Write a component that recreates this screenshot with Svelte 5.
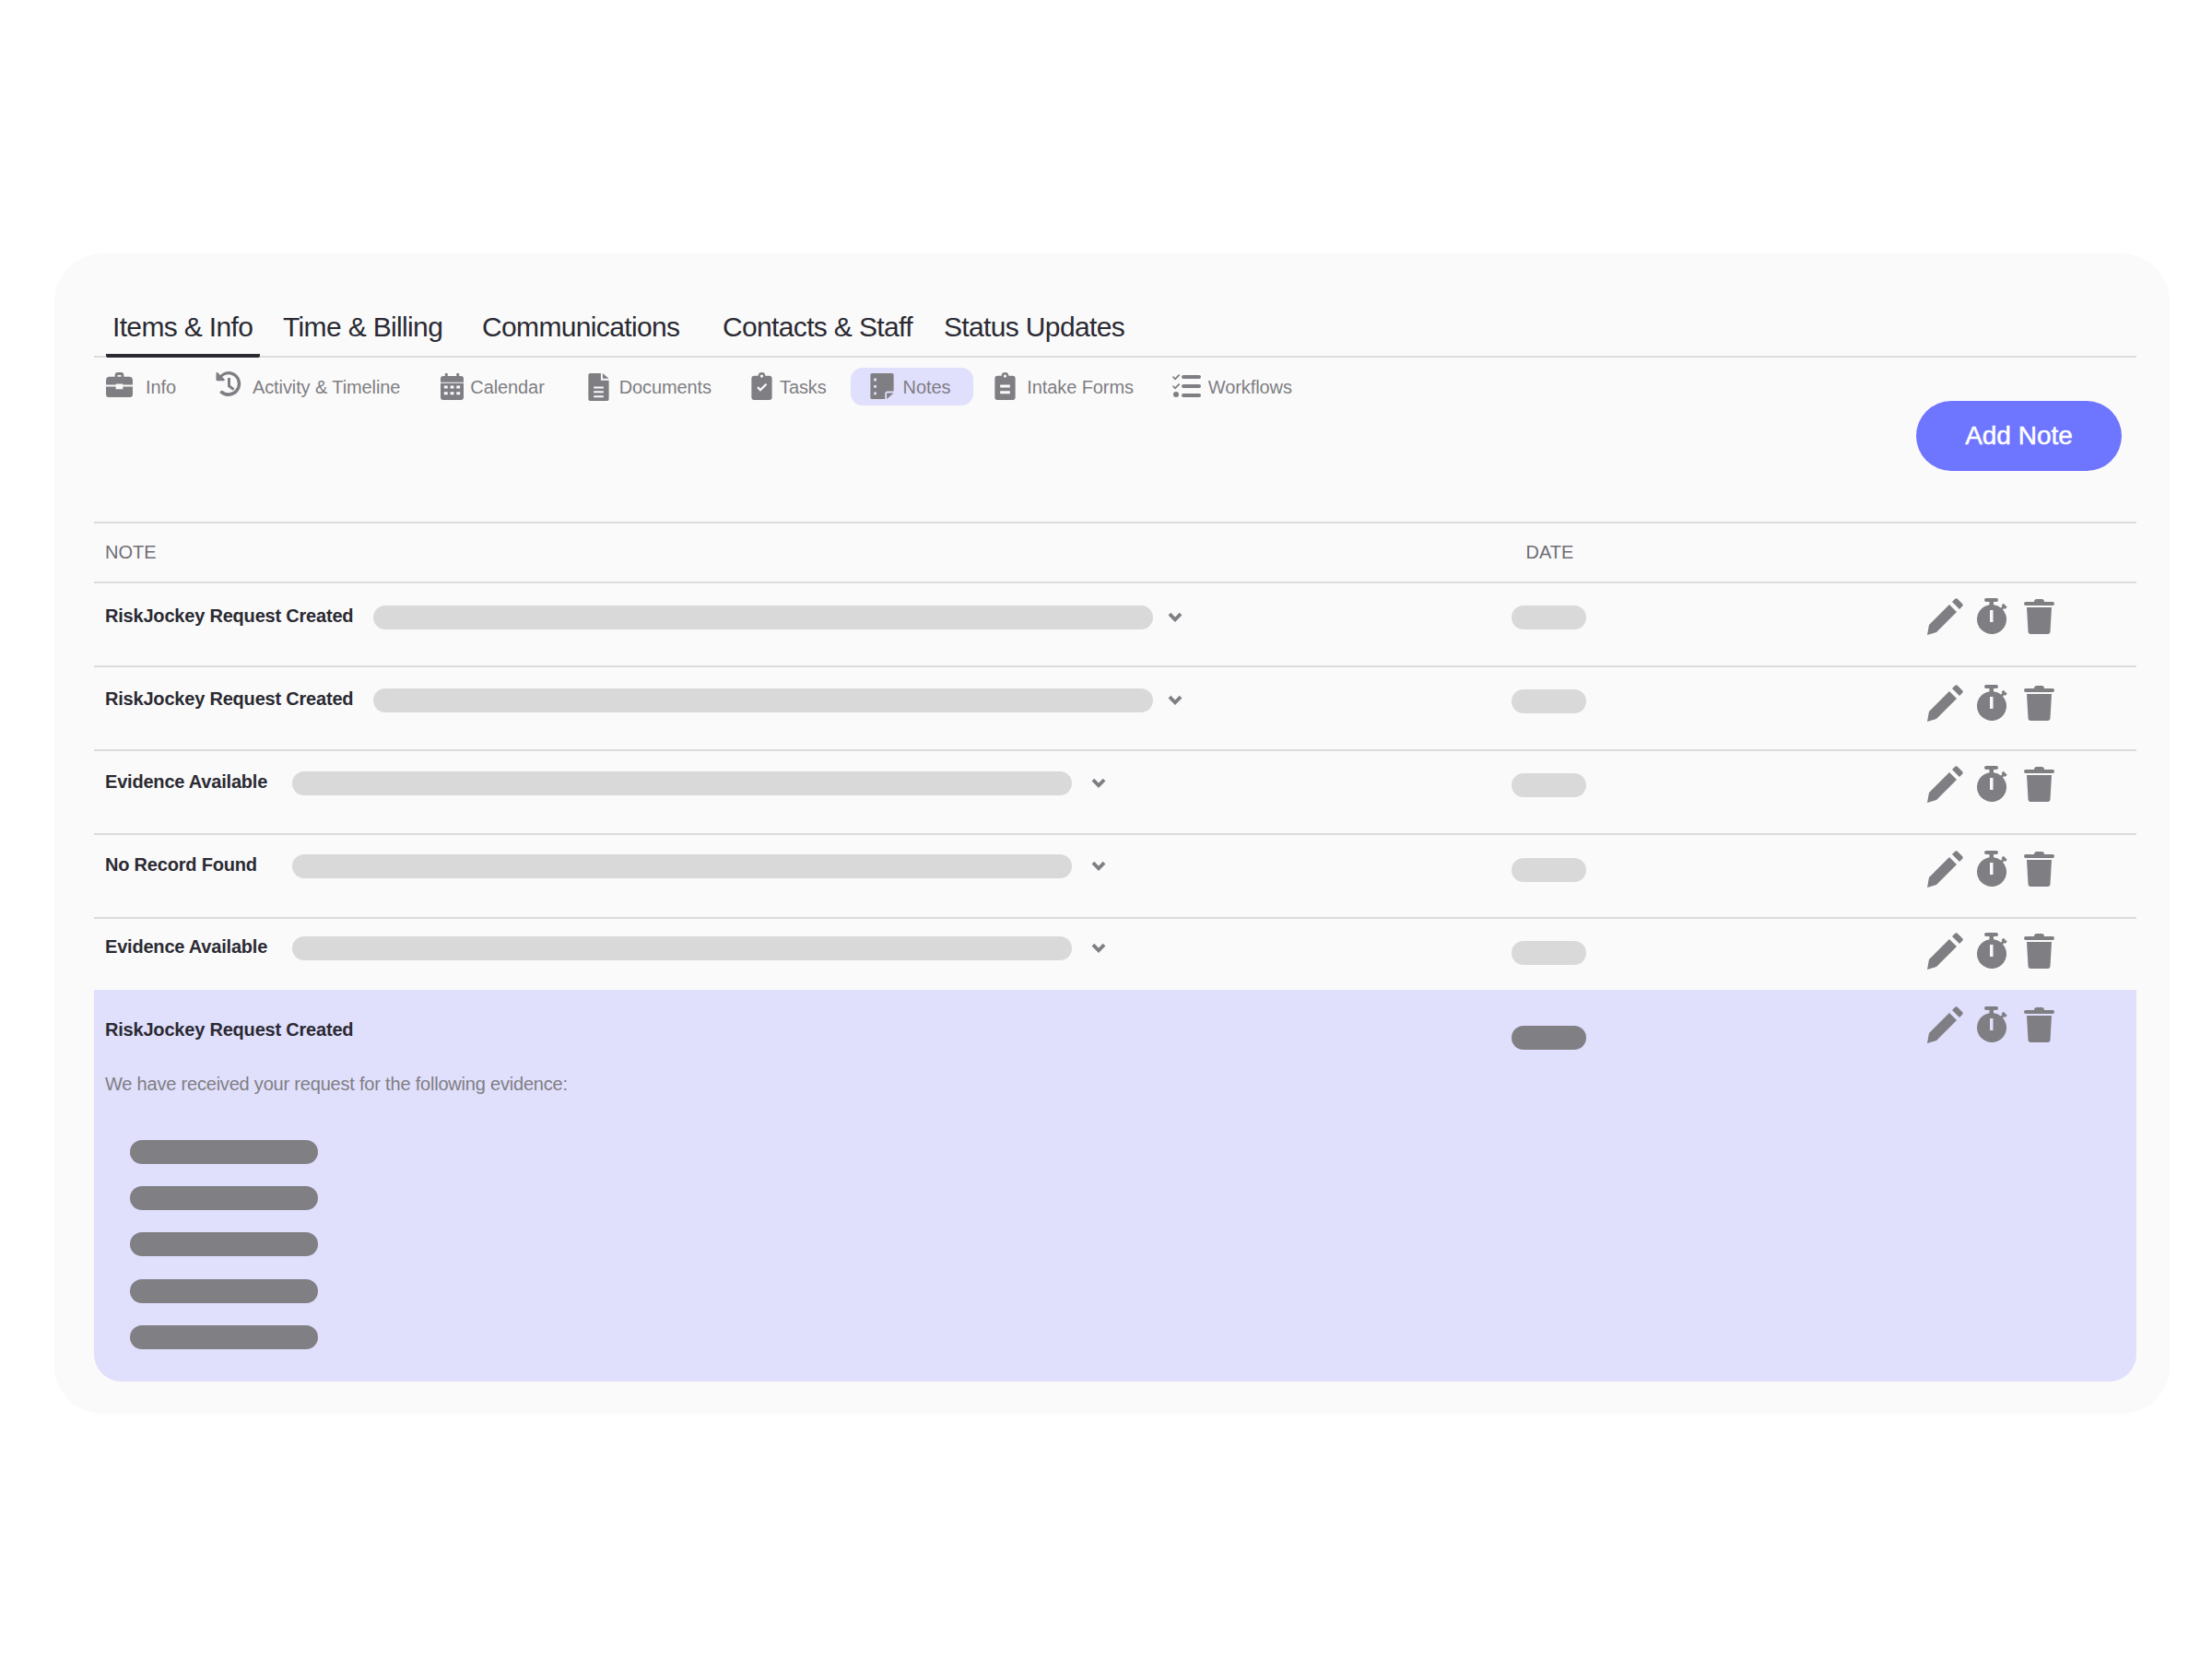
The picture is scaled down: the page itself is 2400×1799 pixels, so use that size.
<script>
  const tabs = ['Items & Info', 'Time & Billing', 'Communications', 'Contacts & Staff', 'Status Updates'];
  const subs = ['Info', 'Activity & Timeline', 'Calendar', 'Documents', 'Tasks', 'Notes', 'Intake Forms', 'Workflows'];
  const rows = [
    { label: 'RiskJockey Request Created', cls: 'a' },
    { label: 'RiskJockey Request Created', cls: 'b' },
    { label: 'Evidence Available', cls: 'c' },
    { label: 'No Record Found', cls: 'd' },
    { label: 'Evidence Available', cls: 'e' }
  ];
  const bars = [0, 1, 2, 3, 4];
</script>

{#snippet subicon(name)}
  {#if name === 'Info'}
    <svg class="ic i-info" viewBox="0 0 30 28"><path d="M10 5V3a3 3 0 0 1 3-3h4a3 3 0 0 1 3 3v2h6a4 4 0 0 1 4 4v5H19v-1h-8v1H0V9a4 4 0 0 1 4-4zm3-2v2h4V3z" fill-rule="evenodd"/><path d="M0 16h11v3h8v-3h11v9a3 3 0 0 1-3 3H3a3 3 0 0 1-3-3z"/></svg>
  {:else if name === 'Activity & Timeline'}
    <svg class="ic i-act" viewBox="0 0 28 28"><path d="M14.5 0A13.5 13.5 0 0 0 5 3.9L2.4 1.4C1.6.6.5 1 .5 2.1V9c0 .7.5 1.2 1.2 1.2h6.9c1.100 0 1.500-1.100.8-1.900L7 5.900A10 10 0 1 1 7.500 21a1.300 1.300 0 0 0-1.700.100l-.9.900c-.5.500-.5 1.300.1 1.800A13.500 13.500 0 1 0 14.500 0z"/><path d="M13 7h3v8l4.500 3.500-1.800 2.300L13 16.500z"/></svg>
  {:else if name === 'Calendar'}
    <svg class="ic i-cal" viewBox="0 0 26 30"><path fill-rule="evenodd" d="M5 0h3v3h10V0h3v3h2a3 3 0 0 1 3 3v4H0V6a3 3 0 0 1 3-3h2zM0 11h26v16a3 3 0 0 1-3 3H3a3 3 0 0 1-3-3zM4 14v3h4v-3zm7 0v3h4v-3zm7 0v3h4v-3zM4 21v3h4v-3zm7 0v3h4v-3zm7 0v3h4v-3z"/></svg>
  {:else if name === 'Documents'}
    <svg class="ic i-doc" viewBox="0 0 23 31"><path fill-rule="evenodd" d="M2 0h12v8h9v21a2 2 0 0 1-2 2H2a2 2 0 0 1-2-2V2a2 2 0 0 1 2-2zm4 15v2h11v-2zm0 5v2h11v-2zm0 5v2h11v-2z"/><path d="M16 0l7 6h-7z"/></svg>
  {:else if name === 'Tasks'}
    <svg class="ic i-task" viewBox="0 0 23 31"><path fill-rule="evenodd" d="M7.500 4a4 4 0 0 1 8 0H20a3 3 0 0 1 3 3v21a3 3 0 0 1-3 3H3a3 3 0 0 1-3-3V7a3 3 0 0 1 3-3zm4-1.500a1.700 1.700 0 1 0 0 3.400 1.700 1.700 0 0 0 0-3.400zM6 17.500l4 4 7.500-7.500-1.700-1.700-5.800 5.800-2.300-2.300z"/></svg>
  {:else if name === 'Notes'}
    <svg class="ic i-note" viewBox="0 0 27 30"><path fill-rule="evenodd" d="M2 0h23a2 2 0 0 1 2 2v19h-7a3 3 0 0 0-3 3v6H2a2 2 0 0 1-2-2V2a2 2 0 0 1 2-2zm2 6v3h3V6zm0 8v3h3v-3zm0 8v3h3v-3z"/><path d="M19 23h8l-8 7z"/></svg>
  {:else if name === 'Intake Forms'}
    <svg class="ic i-task" viewBox="0 0 23 31"><path fill-rule="evenodd" d="M7.500 4a4 4 0 0 1 8 0H20a3 3 0 0 1 3 3v21a3 3 0 0 1-3 3H3a3 3 0 0 1-3-3V7a3 3 0 0 1 3-3zm4-1.500a1.700 1.700 0 1 0 0 3.400 1.700 1.700 0 0 0 0-3.400zM6 14v3h11v-3zm0 7v3h11v-3z"/></svg>
  {:else}
    <svg class="ic i-flow" viewBox="0 0 31 27"><path d="M12 2h17a2 2 0 0 1 0 4H12a2 2 0 0 1 0-4zM12 12h17a2 2 0 0 1 0 4H12a2 2 0 0 1 0-4zM12 22h17a2 2 0 0 1 0 4H12a2 2 0 0 1 0-4z"/><path d="M1 3l2 2 4-4 1.300 1.300L3 7.600 0 4.300zM1 13l2 2 4-4 1.300 1.300L3 17.600 0 14.300z"/><circle cx="4" cy="23" r="3"/></svg>
  {/if}
{/snippet}

{#snippet actions()}
  <div class="actions">
    <svg class="pencil" viewBox="0 0 40 40"><path d="M25 7l8 8L11 37 1 40 3 29z"/><path d="M28 4l3-3c1-1 2-1 3 0l5 5c1 1 1 2 0 3l-3 3z"/></svg>
    <svg class="watch" viewBox="0 0 34 40"><path fill-rule="evenodd" d="M11 0h11a1.500 1.500 0 0 1 0 4h-3v3.200a15.500 15.500 0 0 1 8 3.200l1.500-1.500-1-1 2.200-2.200 4 4-2.200 2.200-1-1-1.500 1.500A16 16 0 1 1 14.500 7.200V4H11a1.500 1.500 0 0 1 0-4zm4 13v13h3.500V13z"/></svg>
    <svg class="trash" viewBox="0 0 33 38"><path d="M11 3c0-2 1-3 3-3h5c2 0 3 1 3 3h9a2 2 0 0 1 0 4H2a2 2 0 0 1 0-4z"/><path d="M3 9h27l-1.500 26a3 3 0 0 1-3 3h-18a3 3 0 0 1-3-3z"/></svg>
  </div>
{/snippet}

<div class="card">
  <nav class="tabs">
    {#each tabs as t, i}
      <span class="tab" class:active={i === 0}>{t}</span>
    {/each}
  </nav>

  <div class="toolbar">
    <div class="subs">
      {#each subs as s}
        <div class="sub" class:on={s === 'Notes'}>
          {@render subicon(s)}
          <span>{s}</span>
        </div>
      {/each}
    </div>
    <button class="add">Add Note</button>
  </div>

  <div class="thead">
    <span>NOTE</span>
    <span class="th-date">DATE</span>
  </div>

  {#each rows as r}
    <div class="row {r.cls}">
      <div class="note">
        <strong>{r.label}</strong>
        <i class="bar"></i>
        <svg class="chev" viewBox="0 0 14 10"><path d="M1.500 2L7 7.500 12.500 2" /></svg>
      </div>
      <i class="date"></i>
      {@render actions()}
    </div>
  {/each}

  <div class="open">
    <div class="open-top">
      <div class="open-text">
        <strong>RiskJockey Request Created</strong>
        <p>We have received your request for the following evidence:</p>
      </div>
      <i class="date dark"></i>
      {@render actions()}
    </div>
    <div class="list">
      {#each bars as b}
        <i class="item" data-b={b}></i>
      {/each}
    </div>
  </div>
</div>

<style>
  :global(body) {
    margin: 0;
    background: #fff;
  }
  .card {
    box-sizing: border-box;
    width: 2295px;
    height: 1259px;
    margin: 275px 0 0 59px;
    padding: 0 36px 0 43px;
    background: #fafafa;
    border-radius: 52px;
    font-family: "Liberation Sans", Arial, sans-serif;
    color: #2b2a33;
  }
  .tabs {
    display: flex;
    height: 113px;
    box-sizing: border-box;
    border-bottom: 2px solid #dcdcdc;
    align-items: flex-end;
  }
  .tab {
    font-size: 30px;
    letter-spacing: -0.65px;
    line-height: 34px;
    padding-bottom: 12px;
    margin-bottom: -2px;
    border-bottom: 4px solid transparent;
    white-space: nowrap;
  }
  .tab:nth-child(1) { width: 167px; margin-left: 13px; border-color: #2b2a33; border-radius: 0 0 2px 2px; text-indent: 7px; }
  .tab:nth-child(2) { margin-left: 25px; width: 191px; }
  .tab:nth-child(3) { margin-left: 25px; width: 236px; }
  .tab:nth-child(4) { margin-left: 25px; width: 215px; }
  .tab:nth-child(5) { margin-left: 25px; }

  .toolbar {
    display: flex;
    justify-content: space-between;
    align-items: flex-start;
    height: 178px;
    padding-right: 16px;
  }
  .subs {
    display: flex;
    align-items: center;
    margin-top: 11px;
    margin-left: 13px;
    height: 41px;
  }
  .sub {
    display: flex;
    align-items: center;
    height: 41px;
    font-size: 20px;
    letter-spacing: -0.1px;
    color: #7f7e83;
    white-space: nowrap;
    border-radius: 13px;
  }
  .sub span { padding-top: 2px; }
  .sub:nth-child(1) { gap: 14px; }
  .sub:nth-child(2) { gap: 12px; margin-left: 43px; }
  .sub:nth-child(3) { gap: 7px; margin-left: 44px; }
  .sub:nth-child(4) { gap: 11px; margin-left: 47px; }
  .sub:nth-child(5) { gap: 8px; margin-left: 43px; }
  .sub:nth-child(6) { gap: 10px; margin-left: 26px; padding: 0 25px 0 21px; background: #e0dffc; }
  .sub:nth-child(7) { gap: 12px; margin-left: 23px; }
  .sub:nth-child(8) { gap: 8px; margin-left: 42px; }
  .ic { display: block; fill: #7f7e83; flex: none; }
  .i-info { width: 29px; height: 27px; margin-top: -5px; }
  .i-act { width: 28px; height: 28px; margin-top: -6px; }
  .i-cal { width: 25px; height: 29px; }
  .i-doc { width: 23px; height: 30px; }
  .i-task { width: 23px; height: 30px; margin-top: -2px; }
  .i-note { width: 26px; height: 28px; margin-top: -1px; }
  .i-flow { width: 31px; height: 27px; margin-top: -2px; }

  .add {
    width: 223px;
    height: 76px;
    margin-top: 47px;
    border: 0;
    border-radius: 38px;
    background: #6e75ff;
    color: #fff;
    font: 500 28px "Liberation Sans", Arial, sans-serif;
    -webkit-text-stroke: 0.5px #fff;
  }

  .thead {
    display: flex;
    height: 67px;
    box-sizing: border-box;
    align-items: center;
    padding-left: 12px;
    border-top: 2px solid #dcdcdc;
    border-bottom: 2px solid #dcdcdc;
    font-size: 20px;
    color: #6f6e74;
  }
  .th-date { margin-left: 1486px; }

  .row {
    display: grid;
    grid-template-columns: 1538px 81px 1fr;
    box-sizing: border-box;
    height: 91px;
    border-bottom: 2px solid #dcdcdc;
    align-items: start;
  }
  .row.e { height: 77px; border-bottom: 0; }
  .note {
    display: flex;
    align-items: center;
    padding: 20px 0 0 12px;
    height: 30px;
  }
  .note strong, .open strong {
    font-size: 20px;
    line-height: 30px;
    font-weight: 700;
    letter-spacing: -0.2px;
    white-space: nowrap;
    color: #2b2a33;
  }
  .row.c strong, .row.d strong, .row.e strong { width: 181px; }
  .row.c .chev, .row.d .chev, .row.e .chev { margin-left: 21px; }
  .bar {
    display: block;
    width: 846px;
    height: 26px;
    margin-left: 22px;
    margin-top: 3px;
    border-radius: 13px;
    background: #d9d9d9;
  }
  .chev {
    width: 16px;
    height: 11px;
    margin-left: 16px;
    margin-top: 2px;
    fill: none;
    stroke: #7f7e83;
    stroke-width: 3.5;
  }
  .date {
    display: block;
    width: 81px;
    height: 26px;
    margin-top: 24px;
    border-radius: 13px;
    background: #d9d9d9;
  }
  .date.dark { background: #807f84; margin-top: 39px; }
  .actions {
    display: flex;
    align-items: center;
    gap: 15px;
    margin: 16px 0 0 369px;
    height: 40px;
  }
  .pencil { width: 40px; height: 40px; fill: #7f7e83; }
  .watch { width: 34px; height: 40px; fill: #7f7e83; margin-left: -1px; }
  .trash { width: 33px; height: 38px; fill: #7f7e83; margin-left: 3px; }

  .row.b .date { margin-top: 24px; }
  .row.b .note { padding-top: 19px; }
  .row.b .actions { margin-top: 19px; }
  .row.c .date { margin-top: 24px; }
  .row.c .note { padding-top: 18px; }
  .row.c .actions { margin-top: 16px; }
  .row.d .date { margin-top: 25px; }
  .row.d .note { padding-top: 17px; }
  .row.d .actions { margin-top: 17px; }
  .row.e .date { margin-top: 24px; }
  .row.e .note { padding-top: 15px; }
  .row.e .actions { margin-top: 15px; }

  .open {
    box-sizing: border-box;
    height: 425px;
    background: #e0dffc;
    border-radius: 0 0 30px 30px;
  }
  .open-top {
    display: grid;
    grid-template-columns: 1538px 81px 1fr;
    align-items: start;
  }
  .open-text { padding: 28px 0 0 12px; }
  .open strong { display: block; }
  .open p {
    margin: 29px 0 0;
    font-size: 20px;
    line-height: 30px;
    letter-spacing: -0.2px;
    color: #7f7e83;
  }
  .open .actions { margin-top: 18px; }
  .list {
    display: flex;
    flex-direction: column;
    gap: 24.200px;
    margin: 46px 0 0 39px;
  }
  .item {
    display: block;
    width: 204px;
    height: 26px;
    border-radius: 13px;
    background: #807f84;
  }
</style>
